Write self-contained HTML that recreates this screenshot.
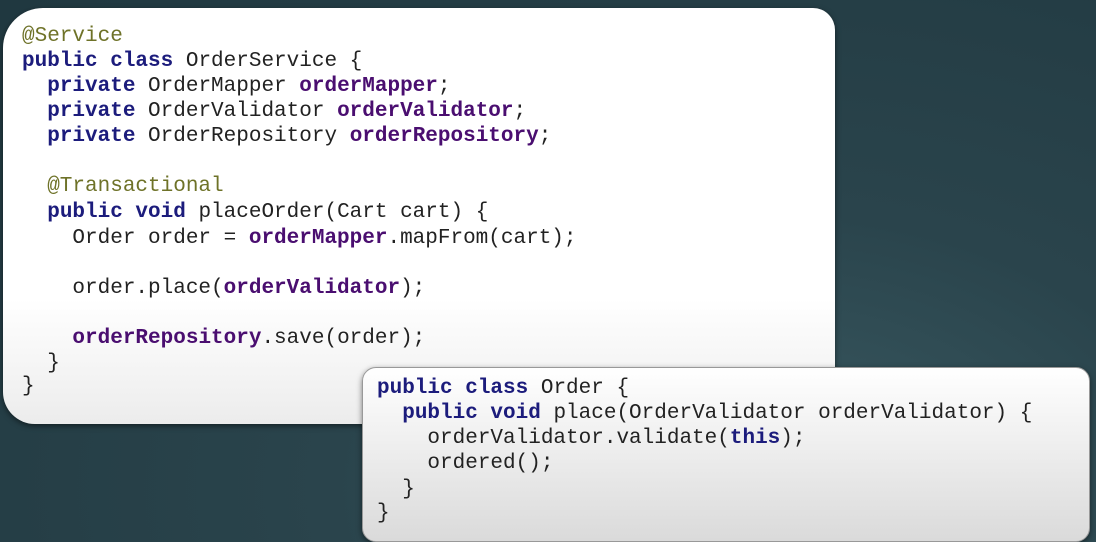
<!DOCTYPE html>
<html><head><meta charset="utf-8"><style>
html,body{margin:0;padding:0}
body{width:1096px;height:542px;overflow:hidden;position:relative;
background:radial-gradient(ellipse at 70% 90%,#3a5a62 0%,#2a444c 40%,#203840 100%);
font-family:"Liberation Mono","DejaVu Sans Mono",monospace;font-size:21px;color:#222}
.box{position:absolute;box-shadow:0 2px 6px rgba(0,0,0,.5)}
#b1{left:3px;top:8px;width:832px;height:416px;border-radius:40px 22px 8px 32px;
background:linear-gradient(#ffffff 70%,#ececec 100%)}
#b2{left:362px;top:367px;width:726px;height:173px;border-radius:14px;border:1px solid #999;
background:linear-gradient(#ffffff 0%,#dadada 100%)}
.l{position:absolute;white-space:pre;line-height:25px;height:25px}
.k{color:#1c1c7c;font-weight:bold}
.f{color:#4a0e70;font-weight:bold}
.a{color:#6e7228}
</style></head><body>
<div class="box" id="b1"></div>
<div class="box" id="b2"></div>
<div class="l a" style="left:22px;top:24px">@Service</div>
<div class="l" style="left:22px;top:49px"><span class="k">public class</span> OrderService {</div>
<div class="l" style="left:22px;top:74px">  <span class="k">private</span> OrderMapper <span class="f">orderMapper</span>;</div>
<div class="l" style="left:22px;top:99px">  <span class="k">private</span> OrderValidator <span class="f">orderValidator</span>;</div>
<div class="l" style="left:22px;top:124px">  <span class="k">private</span> OrderRepository <span class="f">orderRepository</span>;</div>
<div class="l a" style="left:22px;top:174px">  @Transactional</div>
<div class="l" style="left:22px;top:200px">  <span class="k">public void</span> placeOrder(Cart cart) {</div>
<div class="l" style="left:22px;top:226px">    Order order = <span class="f">orderMapper</span>.mapFrom(cart);</div>
<div class="l" style="left:22px;top:276px">    order.place(<span class="f">orderValidator</span>);</div>
<div class="l" style="left:22px;top:326px">    <span class="f">orderRepository</span>.save(order);</div>
<div class="l" style="left:22px;top:351px">  }</div>
<div class="l" style="left:22px;top:374px">}</div>

<div class="l" style="left:377px;top:376px"><span class="k">public class</span> Order {</div>
<div class="l" style="left:377px;top:401px">  <span class="k">public void</span> place(OrderValidator orderValidator) {</div>
<div class="l" style="left:377px;top:426px">    orderValidator.validate(<span class="k">this</span>);</div>
<div class="l" style="left:377px;top:451px">    ordered();</div>
<div class="l" style="left:377px;top:477px">  }</div>
<div class="l" style="left:377px;top:501px">}</div>
</body></html>
